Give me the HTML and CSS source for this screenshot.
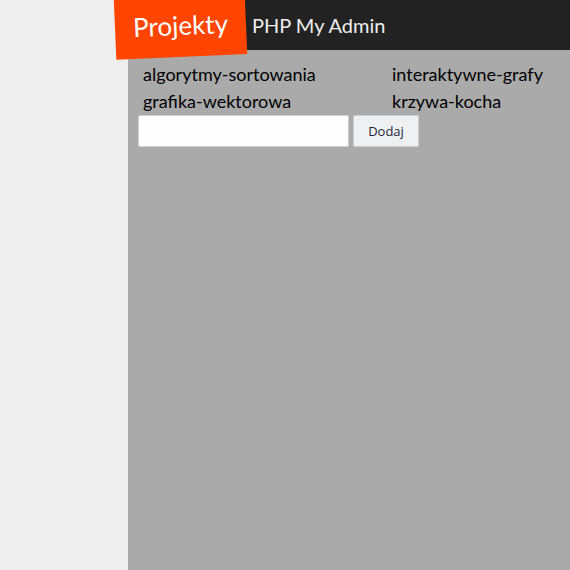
FILE: index.html
```html
<!DOCTYPE html>
<html>
<head>
<meta charset="utf-8">
<link rel="stylesheet" href="styles.css">
</head>
<body>
<div class="page">
  <aside class="sidebar"></aside>
  <div class="main">
    <header class="topbar">
      <span class="admin">PHP My Admin</span>
    </header>
    <section class="content">
      <ul class="projects">
        <li>algorytmy-sortowania</li>
        <li>interaktywne-grafy</li>
        <li>grafika-wektorowa</li>
        <li>krzywa-kocha</li>
      </ul>
      <form class="add">
        <input type="text" class="name">
        <button type="button" class="btn">Dodaj</button>
      </form>
    </section>
  </div>
  <div class="logo">Projekty</div>
</div>
</body>
</html>
```
FILE: styles.css
```css
html, body {
  margin: 0;
  padding: 0;
  height: 100%;
}
body {
  font-family: Lato, "Liberation Sans", sans-serif;
  background: #eeeeee;
}
.page {
  position: relative;
  display: flex;
  height: 570px;
  overflow: hidden;
}
.sidebar {
  width: 128px;
  flex: none;
  background: #eeeeee;
}
.main {
  flex: 1;
  display: flex;
  flex-direction: column;
  background: #aaaaaa;
}
.topbar {
  height: 50px;
  flex: none;
  background: #222222;
  display: flex;
  align-items: center;
  padding-left: 124px;
}
.admin {
  color: #eeeeee;
  font-size: 20px;
}
.content {
  padding: 11px 10px;
}
.projects {
  list-style: none;
  margin: 0;
  padding: 0 0 0 5px;
  display: grid;
  grid-template-columns: 249px auto;
  font-size: 18px;
  line-height: 27px;
  color: #000;
}
.add {
  display: flex;
  gap: 4px;
  margin-top: 0;
}
.name {
  box-sizing: border-box;
  width: 211px;
  height: 32px;
  margin: 0;
  background: #fefefe;
  border: 1px solid #d0d0d0;
  border-radius: 2px;
}
.btn {
  box-sizing: border-box;
  width: 66px;
  height: 32px;
  margin: 0;
  background: #eff0f2;
  border: 1px solid #cfcfcf;
  border-radius: 2px;
  font-family: "Open Sans", sans-serif;
  font-size: 13px;
  color: #1a2638;
}
.logo {
  position: absolute;
  left: 115px;
  top: -4px;
  width: 131px;
  height: 61px;
  background: #ff4500;
  color: #ffffff;
  font-size: 26px;
  display: flex;
  align-items: center;
  justify-content: center;
  padding-bottom: 3px;
  box-sizing: border-box;
  transform: rotate(-2.5deg);
}
```
